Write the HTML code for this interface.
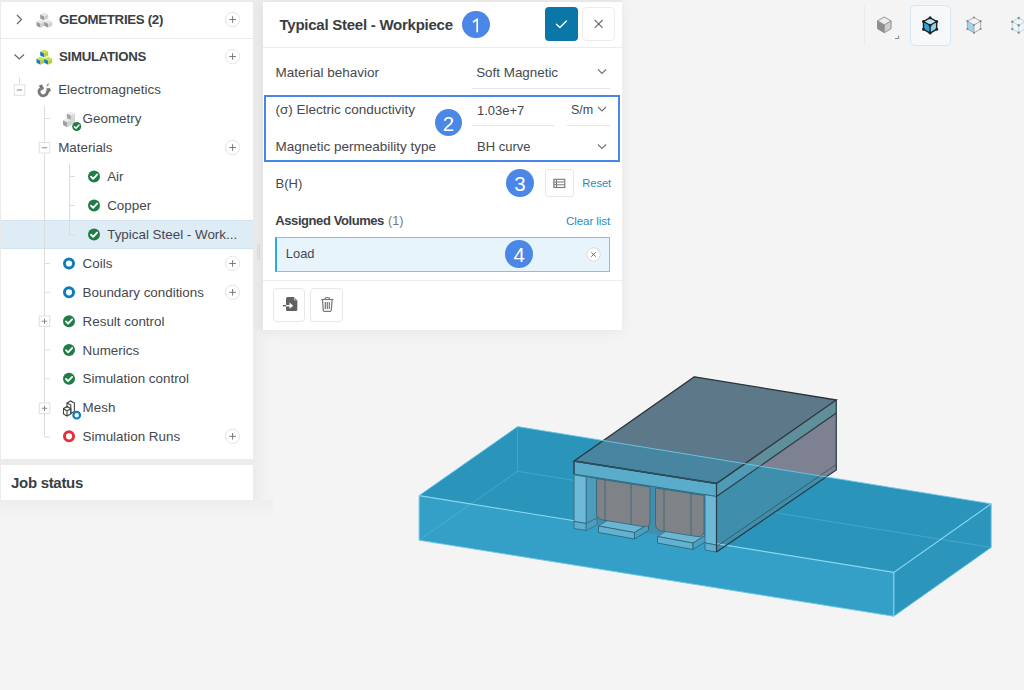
<!DOCTYPE html>
<html><head><meta charset="utf-8">
<style>
*{box-sizing:border-box;margin:0;padding:0}
html,body{width:1024px;height:690px;overflow:hidden}
body{background:#f4f4f4;font-family:"Liberation Sans",sans-serif;color:#3d4045;position:relative}
.abs{position:absolute}
.t{position:absolute;white-space:nowrap;line-height:1}
#leftbg{left:0;top:0;width:263px;height:330px;background:#ebebeb}
#tree{left:1px;top:2px;width:252px;height:457px;background:#fff}
#gap{display:none}
#job{left:1px;top:465px;width:252px;height:35px;background:#fff}
#form{left:263px;top:2px;width:359px;height:328px;background:#fff;box-shadow:0 2px 14px rgba(0,0,0,.06)}
.hdr{font-weight:bold;font-size:13.25px;letter-spacing:-0.3px;color:#3b3e43}
.ti{font-size:13.4px;color:#45484d}
.lbl{font-size:13.5px;color:#45484d}
.val{font-size:13px;color:#45484d}
.pc{position:absolute;width:15px;height:15px;border:1px solid #e3e3e3;border-radius:50%}
.pc:before{content:"";position:absolute;left:3px;top:6px;width:7px;height:1px;background:#777}
.pc:after{content:"";position:absolute;left:6px;top:3px;width:1px;height:7px;background:#777}
.vl{position:absolute;width:1px;background:#dcdcdc}
.hl{position:absolute;height:1px;background:#dcdcdc}
.bx{position:absolute;width:11px;height:11px;border:1px solid #e2e2e2;background:#fff}
.bx:before{content:"";position:absolute;left:2px;top:4px;width:5px;height:1px;background:#888}
.bx.p:after{content:"";position:absolute;left:4px;top:2px;width:1px;height:5px;background:#888}
.ring{position:absolute;width:12px;height:12px;border-radius:50%;border:2.5px solid #0e7cb9}
.badge{position:absolute;width:27.8px;height:27.8px;border-radius:50%;background:#4a87e6;color:#fff;font-size:20.5px;text-align:center;line-height:29.5px}
</style></head><body>
<div class="abs" id="leftbg"></div>
<div class="abs" style="left:0;top:330px;width:253px;height:170px;background:#ececec"></div>
<div class="abs" style="left:253px;top:330px;width:20px;height:190px;background:linear-gradient(to right,#ececec,#f0f0f0 40%,#f4f4f4)"></div>
<div class="abs" style="left:0;top:500px;width:273px;height:20px;background:linear-gradient(#ededed,#f1f1f1 40%,#f4f4f4)"></div>

<div class="abs" style="left:263px;top:0;width:360px;height:2px;background:#ececec"></div>
<div class="abs" id="gap"></div>
<div class="abs" id="tree"></div>
<div class="abs" id="job"></div>
<div class="abs" id="form"></div>

<!-- TREE -->
<div class="hl" style="left:1px;top:38px;width:252px;background:#ececec"></div>

<div class="t hdr" style="left:59px;top:12.8px">GEOMETRIES (2)</div>
<div class="t hdr" style="left:59px;top:49.8px">SIMULATIONS</div>

<div class="abs" style="left:1px;top:220px;width:252px;height:28.5px;background:#deecf6;border-top:1px solid #d3e3ef;border-bottom:1px solid #d3e3ef"></div>
<div class="t ti" style="left:58.2px;top:83.0px">Electromagnetics</div>
<div class="t ti" style="left:82.6px;top:112.0px">Geometry</div>
<div class="t ti" style="left:58.2px;top:141.0px">Materials</div>
<div class="t ti" style="left:107.2px;top:170.0px">Air</div>
<div class="t ti" style="left:107.2px;top:199.0px">Copper</div>
<div class="t ti" style="left:107.2px;top:228.0px">Typical Steel - Work...</div>
<div class="t ti" style="left:82.6px;top:257.0px">Coils</div>
<div class="t ti" style="left:82.6px;top:285.8px">Boundary conditions</div>
<div class="t ti" style="left:82.6px;top:314.7px">Result control</div>
<div class="t ti" style="left:82.6px;top:343.5px">Numerics</div>
<div class="t ti" style="left:82.6px;top:372.3px">Simulation control</div>
<div class="t ti" style="left:82.6px;top:401.2px">Mesh</div>
<div class="t ti" style="left:82.6px;top:429.8px">Simulation Runs</div>
<svg class="abs" style="left:0;top:0" width="253" height="460">
<path d="M19.5 77 V84" stroke="#dcdcdc" stroke-width="1"/>
<path d="M44.5 106 V437 H50" fill="none" stroke="#dcdcdc" stroke-width="1"/>
<path d="M44.5 118.5 H50" stroke="#dcdcdc" stroke-width="1"/>
<path d="M44.5 263.5 H50" stroke="#dcdcdc" stroke-width="1"/>
<path d="M44.5 292.3 H50" stroke="#dcdcdc" stroke-width="1"/>
<path d="M44.5 350 H50" stroke="#dcdcdc" stroke-width="1"/>
<path d="M44.5 378.8 H50" stroke="#dcdcdc" stroke-width="1"/>
<path d="M69.5 164 V235 H75" fill="none" stroke="#dcdcdc" stroke-width="1"/>
<path d="M69.5 176.5 H75" stroke="#dcdcdc" stroke-width="1"/>
<path d="M69.5 205.5 H75" stroke="#dcdcdc" stroke-width="1"/>
<rect x="14.25" y="84.75" width="10.5" height="10.5" fill="#fff" stroke="#e0e0e0" stroke-width="1"/><path d="M16.75 90.0 H22.25" stroke="#888" stroke-width="1"/>
<rect x="39.25" y="142.5" width="10.5" height="10.5" fill="#fff" stroke="#e0e0e0" stroke-width="1"/><path d="M41.75 147.75 H47.25" stroke="#888" stroke-width="1"/>
<rect x="39.25" y="316" width="10.5" height="10.5" fill="#fff" stroke="#e0e0e0" stroke-width="1"/><path d="M41.75 321.25 H47.25" stroke="#888" stroke-width="1"/><path d="M44.5 318.5 V324" stroke="#888" stroke-width="1"/>
<rect x="39.25" y="403" width="10.5" height="10.5" fill="#fff" stroke="#e0e0e0" stroke-width="1"/><path d="M41.75 408.25 H47.25" stroke="#888" stroke-width="1"/><path d="M44.5 405.5 V411" stroke="#888" stroke-width="1"/>
<path d="M17 15 L21.5 19.5 L17 24" fill="none" stroke="#666" stroke-width="1.2"/>
<path d="M14.5 54.5 L19.3 59 L24 54.5" fill="none" stroke="#666" stroke-width="1.2"/>
<path d="M40.2 14.5 L44.2 12.5 L48.2 14.5 L44.2 16.5 Z" fill="#e6e6e6"/><path d="M40.2 14.5 L44.2 16.5 L44.2 20.5 L40.2 18.5 Z" fill="#9a9a9a"/><path d="M48.2 14.5 L44.2 16.5 L44.2 20.5 L48.2 18.5 Z" fill="#cfcfcf"/>
<path d="M36.5 21.8 L40.5 19.8 L44.5 21.8 L40.5 23.8 Z" fill="#e6e6e6"/><path d="M36.5 21.8 L40.5 23.8 L40.5 27.8 L36.5 25.8 Z" fill="#9a9a9a"/><path d="M44.5 21.8 L40.5 23.8 L40.5 27.8 L44.5 25.8 Z" fill="#cfcfcf"/>
<path d="M44.2 21.8 L48.2 19.8 L52.2 21.8 L48.2 23.8 Z" fill="#e6e6e6"/><path d="M44.2 21.8 L48.2 23.8 L48.2 27.8 L44.2 25.8 Z" fill="#9a9a9a"/><path d="M52.2 21.8 L48.2 23.8 L48.2 27.8 L52.2 25.8 Z" fill="#cfcfcf"/>
<path d="M40.2 51.5 L44.2 49.5 L48.2 51.5 L44.2 53.5 Z" fill="#d4e04a"/><path d="M40.2 51.5 L44.2 53.5 L44.2 57.5 L40.2 55.5 Z" fill="#1a7fc0"/><path d="M48.2 51.5 L44.2 53.5 L44.2 57.5 L48.2 55.5 Z" fill="#b5d136"/>
<path d="M36.5 58.8 L40.5 56.8 L44.5 58.8 L40.5 60.8 Z" fill="#d4e04a"/><path d="M36.5 58.8 L40.5 60.8 L40.5 64.8 L36.5 62.8 Z" fill="#1a7fc0"/><path d="M44.5 58.8 L40.5 60.8 L40.5 64.8 L44.5 62.8 Z" fill="#b5d136"/>
<path d="M44.2 58.8 L48.2 56.8 L52.2 58.8 L48.2 60.8 Z" fill="#d4e04a"/><path d="M44.2 58.8 L48.2 60.8 L48.2 64.8 L44.2 62.8 Z" fill="#1a7fc0"/><path d="M52.2 58.8 L48.2 60.8 L48.2 64.8 L52.2 62.8 Z" fill="#b5d136"/>
<g fill="#777"><path d="M40.3 88.8 A4.1 4.1 0 1 0 47.05 90.3" fill="none" stroke="#777" stroke-width="2.7"/>
<path d="M38.9 85.4 L41.9 84.4 L44.1 88.4 L41.2 90.4 Z"/>
<path d="M46 88.6 L49.6 88 L50.9 90.6 L48.6 92.8 Z"/>
<path d="M48.9 82.4 L46.3 85.4 L47.7 85.6 L45.8 87.6 L49.5 84.6 L48 84.4 Z"/></g>
<g>
<path d="M66.8 113.4 L70.9 111.4 L75 113.4 L70.9 115.4 Z" fill="#ececec"/>
<path d="M66.8 113.4 L70.9 115.4 V124.5 L66.8 122.5 Z" fill="#a4a4a4"/>
<path d="M75 113.4 L70.9 115.4 V124.5 L75 122.5 Z" fill="#d8d8d8"/>
<path d="M63 120.3 L67.3 118.2 L71.6 120.3 L67.3 122.4 Z" fill="#ececec"/>
<path d="M63 120.3 L67.3 122.4 V127.2 L63 125.1 Z" fill="#a0a0a0"/>
<path d="M71.6 120.3 L67.3 122.4 V127.2 L71.6 125.1 Z" fill="#d2d2d2"/>
</g>
<circle cx="76.7" cy="126.5" r="4.5" fill="#1f7d45"/><path d="M74.45 126.65 L76.03 128.22 L79.03 125.08" fill="none" stroke="#fff" stroke-width="1.42" stroke-linecap="round" stroke-linejoin="round"/>
<g fill="none" stroke="#444" stroke-width="1.1"><path d="M67 403 L70.7 401 L74.4 403 L74.4 411.5 L70.8 413.5 L70.8 405 L67 403 V408"/><path d="M63.5 408.5 L67 406.5 L70.8 408.5 L70.8 414 L67 416 L63.5 414 Z M67 411 V416 M63.5 408.5 L67 411 L70.8 408.5"/></g>
<circle cx="76.7" cy="415.2" r="3.3" fill="#fff" stroke="#0e7cb9" stroke-width="2.2"/>
<circle cx="94" cy="176.5" r="6" fill="#1f7d45"/><path d="M91.00 176.70 L93.10 178.80 L97.10 174.60" fill="none" stroke="#fff" stroke-width="1.90" stroke-linecap="round" stroke-linejoin="round"/>
<circle cx="94" cy="205.5" r="6" fill="#1f7d45"/><path d="M91.00 205.70 L93.10 207.80 L97.10 203.60" fill="none" stroke="#fff" stroke-width="1.90" stroke-linecap="round" stroke-linejoin="round"/>
<circle cx="94" cy="234.5" r="6" fill="#1f7d45"/><path d="M91.00 234.70 L93.10 236.80 L97.10 232.60" fill="none" stroke="#fff" stroke-width="1.90" stroke-linecap="round" stroke-linejoin="round"/>
<circle cx="69" cy="321.2" r="6" fill="#1f7d45"/><path d="M66.00 321.40 L68.10 323.50 L72.10 319.30" fill="none" stroke="#fff" stroke-width="1.90" stroke-linecap="round" stroke-linejoin="round"/>
<circle cx="69" cy="350" r="6" fill="#1f7d45"/><path d="M66.00 350.20 L68.10 352.30 L72.10 348.10" fill="none" stroke="#fff" stroke-width="1.90" stroke-linecap="round" stroke-linejoin="round"/>
<circle cx="69" cy="378.8" r="6" fill="#1f7d45"/><path d="M66.00 379.00 L68.10 381.10 L72.10 376.90" fill="none" stroke="#fff" stroke-width="1.90" stroke-linecap="round" stroke-linejoin="round"/>
<circle cx="69" cy="263.5" r="4.55" fill="none" stroke="#0e7cb9" stroke-width="2.9"/>
<circle cx="69" cy="292.3" r="4.55" fill="none" stroke="#0e7cb9" stroke-width="2.9"/>
<circle cx="69" cy="436.3" r="4.55" fill="none" stroke="#e0313b" stroke-width="2.9"/>
<circle cx="232.6" cy="19.5" r="7.2" fill="#fff" stroke="#e4e4e4" stroke-width="1"/><path d="M229.3 19.5 H235.9 M232.6 16.2 V22.8" stroke="#7a7a7a" stroke-width="1"/>
<circle cx="232.6" cy="56.5" r="7.2" fill="#fff" stroke="#e4e4e4" stroke-width="1"/><path d="M229.3 56.5 H235.9 M232.6 53.2 V59.8" stroke="#7a7a7a" stroke-width="1"/>
<circle cx="232.6" cy="147.5" r="7.2" fill="#fff" stroke="#e4e4e4" stroke-width="1"/><path d="M229.3 147.5 H235.9 M232.6 144.2 V150.8" stroke="#7a7a7a" stroke-width="1"/>
<circle cx="232.6" cy="263.5" r="7.2" fill="#fff" stroke="#e4e4e4" stroke-width="1"/><path d="M229.3 263.5 H235.9 M232.6 260.2 V266.8" stroke="#7a7a7a" stroke-width="1"/>
<circle cx="232.6" cy="292.3" r="7.2" fill="#fff" stroke="#e4e4e4" stroke-width="1"/><path d="M229.3 292.3 H235.9 M232.6 289.0 V295.6" stroke="#7a7a7a" stroke-width="1"/>
<circle cx="232.6" cy="436.3" r="7.2" fill="#fff" stroke="#e4e4e4" stroke-width="1"/><path d="M229.3 436.3 H235.9 M232.6 433.0 V439.6" stroke="#7a7a7a" stroke-width="1"/>
</svg>
<div class="t hdr" style="left:11px;top:475.2px;font-size:15px;letter-spacing:-0.3px">Job status</div>

<!-- FORM -->
<div class="hl" style="left:263px;top:47px;width:359px;background:#ececec"></div>
<div class="t" style="left:279.5px;top:17.3px;font-size:15px;letter-spacing:-0.25px;font-weight:bold;color:#3a3d42">Typical Steel - Workpiece</div>
<div class="badge" style="left:462px;top:10.5px"></div><svg class="abs" style="left:462px;top:10.5px" width="28" height="28"><path d="M11 11.2 L15.2 8.1 V21.3" fill="none" stroke="#fff" stroke-width="1.7" stroke-linejoin="round"/></svg>
<div class="abs" style="left:545px;top:7.3px;width:33.2px;height:33.4px;background:#0a77a8;border-radius:4px"></div>
<div class="abs" style="left:582.3px;top:7.3px;width:33.2px;height:33.4px;background:#fff;border:1px solid #ebebeb;border-radius:4.5px"></div>
<svg class="abs" style="left:540px;top:0" width="85" height="48">
  <path d="M16.4 24.2 L19.9 27.5 L26.4 21" fill="none" stroke="#fff" stroke-width="1.35" stroke-linecap="round" stroke-linejoin="round"/>
  <path d="M54.8 20 L62.6 27.8 M62.6 20 L54.8 27.8" fill="none" stroke="#6a6a6a" stroke-width="1.1"/>
</svg>

<div class="t lbl" style="left:275.5px;top:66.1px">Material behavior</div>
<div class="t val" style="left:476.2px;top:66.1px;font-size:13.4px">Soft Magnetic</div>
<div class="hl" style="left:471.5px;top:88px;width:138.5px;background:#e6e6e6"></div>

<div class="abs" style="left:264.4px;top:95.1px;width:355.2px;height:66.8px;border:2px solid #4a86e8"></div>
<div class="t lbl" style="left:275.5px;top:103.2px">(&sigma;) Electric conductivity</div>
<div class="t val" style="left:477px;top:103.8px">1.03e+7</div>
<div class="hl" style="left:472px;top:125px;width:82px;background:#e6e6e6"></div>
<div class="t val" style="left:571px;top:103.9px;font-size:12.5px">S/m</div>
<div class="hl" style="left:566.7px;top:125px;width:43px;background:#e6e6e6"></div>
<div class="badge" style="left:434.5px;top:108.6px">2</div>
<div class="t lbl" style="left:275.5px;top:140.1px">Magnetic permeability type</div>
<div class="t val" style="left:477px;top:140.1px">BH curve</div>
<svg class="abs" style="left:590px;top:60px" width="25" height="100">
  <path d="M8 9.5 L12 13.5 L16 9.5" fill="none" stroke="#737373" stroke-width="1.1"/>
  <path d="M8 47 L12 51 L16 47" fill="none" stroke="#737373" stroke-width="1.1"/>
  <path d="M8 84.5 L12 88.5 L16 84.5" fill="none" stroke="#737373" stroke-width="1.1"/>
</svg>

<div class="t val" style="left:275.5px;top:176.6px">B(H)</div>
<div class="badge" style="left:506px;top:169px">3</div>
<div class="abs" style="left:545px;top:169.3px;width:28.6px;height:28px;background:#fff;border:1px solid #e6e6e6;border-radius:3px"></div>
<svg class="abs" style="left:545px;top:169px" width="29" height="29">
  <rect x="8.8" y="10.3" width="11" height="8.2" fill="none" stroke="#777" stroke-width="1.1"/>
  <path d="M8.8 13 H19.8 M8.8 15.8 H19.8 M11.5 10.3 V18.5" stroke="#777" stroke-width="1"/>
</svg>
<div class="t" style="left:582.3px;top:178px;font-size:11.2px;letter-spacing:-0.1px;color:#1f8cc0">Reset</div>

<div class="t" style="left:275.3px;top:214.3px;font-size:13px;letter-spacing:-0.42px;font-weight:bold;color:#3b3e43">Assigned Volumes</div><div class="t" style="left:388px;top:214.6px;font-size:12.6px;color:#777">(1)</div>
<div class="t" style="left:566px;top:214.6px;font-size:11.6px;letter-spacing:-0.1px;color:#1f8cc0">Clear list</div>

<div class="abs" style="left:275px;top:237px;width:335px;height:34.5px;background:#e8f4fb;border:1px solid #7cc3e6;border-left:2px solid #29ace0"></div>
<div class="t" style="left:285.8px;top:248.3px;font-size:12.9px;color:#45484d">Load</div>
<div class="badge" style="left:505.3px;top:240px">4</div>
<svg class="abs" style="left:584px;top:244.5px" width="19" height="19">
  <circle cx="9.5" cy="9.5" r="6.8" fill="#fff" stroke="#dadada" stroke-width="1"/>
  <path d="M7.3 7.3 L11.7 11.7 M11.7 7.3 L7.3 11.7" stroke="#555" stroke-width="0.9"/>
</svg>

<div class="hl" style="left:263px;top:279.5px;width:359px;background:#ececec"></div>
<div class="abs" style="left:273.3px;top:288.3px;width:32.2px;height:33.4px;border:1px solid #e8e8e8;border-radius:4px"></div>
<div class="abs" style="left:310.4px;top:288.3px;width:32.3px;height:33.4px;border:1px solid #e8e8e8;border-radius:4px"></div>
<svg class="abs" style="left:263px;top:280px" width="90" height="50">
  <path d="M24.5 17 H31 L34.3 20.3 V29.5 Q34.3 31 32.8 31 H24.5 Q23 31 23 29.5 V18.5 Q23 17 24.5 17 Z" fill="#616161"/>
  <path d="M31.2 17.3 V20.2 H34.1 Z" fill="#fff"/><path d="M31.6 18 L33.5 19.9 H31.6 Z" fill="#777"/>
  <path d="M19.8 25.7 H23" stroke="#616161" stroke-width="1.4"/>
  <path d="M23 25.7 H27" stroke="#fff" stroke-width="1.4"/>
  <path d="M26.5 22.6 L30.2 25.7 L26.5 28.8 Z" fill="#fff"/>
  <g fill="none" stroke="#777" stroke-width="1.2">
    <path d="M58.3 19.5 H70.3"/>
    <path d="M62 19.3 Q62 17.5 64.3 17.5 Q66.6 17.5 66.6 19.3"/>
    <path d="M59.5 20 L60.3 30.3 Q60.5 31.3 61.5 31.3 H67.1 Q68.1 31.3 68.3 30.3 L69.1 20"/>
    <path d="M62.3 22 V29 M64.3 22 V29 M66.3 22 V29"/>
  </g>
</svg>
<div class="abs" style="left:256.5px;top:244px;width:1px;height:16px;background:#d8d8d8"></div>
<div class="abs" style="left:258.5px;top:244px;width:1px;height:16px;background:#d8d8d8"></div>

<!-- VIEWPORT -->
<!--3D-->
<svg class="abs" style="left:0;top:0" width="1024" height="690">
<defs><clipPath id="inpl"><polygon points="517.6,426.6 991.2,503.8 991.2,547.4 893.8,616.3 419.1,540.2 419.1,495.6"/></clipPath></defs>
<polygon points="694.5,376.8 836.3,400.0 716.5,483.5 574.0,461.0" fill="#5c7889"/>
<polygon points="716.5,483.5 836.3,400.0 836.3,413.0 716.5,496.5" fill="#5f8f9a"/>
<polygon points="716.5,496.5 836.3,413.0 836.3,470.0 716.5,552.0" fill="#7e8192"/>
<polygon points="517.6,426.6 991.2,503.8 893.8,572.4 419.1,495.6" fill="#2a94ba"/>
<polygon points="419.1,495.6 893.8,572.4 893.8,616.3 419.1,540.2" fill="#35a0c7"/>
<polygon points="893.8,572.4 991.2,503.8 991.2,547.4 893.8,616.3" fill="#2c95bc"/>
<path d="M517.6 426.6 V471.3 L991.2 547.4 M517.6 471.3 L419.1 540.2" fill="none" stroke="#5cc0e4" stroke-width="0.8" opacity="0.6"/>
<g clip-path="url(#inpl)">
<polygon points="694.5,376.8 836.3,400.0 716.5,483.5 574.0,461.0" fill="#4785a0"/>
<polygon points="716.5,483.5 836.3,400.0 836.3,413.0 716.5,496.5" fill="#4f9bb6"/>
<polygon points="716.5,496.5 836.3,413.0 836.3,470.0 716.5,552.0" fill="#3f8eab"/>
</g>
<path d="M419.1 495.6 L893.8 572.4 L991.2 503.8 M893.8 572.4 V616.3" fill="none" stroke="#86d6f2" stroke-width="1.1"/>
<polygon points="586.2,476.8 705,494.7 705,543 586.2,523.5" fill="#3f8fae"/>
<polygon points="586.2,476.8 597,478.6 597,518 586.2,523.5" fill="#4d9cbb" stroke="#2f6577" stroke-width="0.6"/>
<polygon points="598.5,526.0 634.5,532.5 648.5,524.0 612.5,517.5" fill="#6ab6d4" stroke="#2f6577" stroke-width="0.6"/><polygon points="598.5,526.0 634.5,532.5 634.5,539.0 598.5,532.5" fill="#63b1d0" stroke="#2f6577" stroke-width="0.9"/><polygon points="634.5,532.5 648.5,524.0 648.5,530.5 634.5,539.0" fill="#4e9fbf" stroke="#2f6577" stroke-width="0.9"/>
<polygon points="657.5,536.5 693.0,543.0 706.0,535.0 670.5,528.5" fill="#6ab6d4" stroke="#2f6577" stroke-width="0.6"/><polygon points="657.5,536.5 693.0,543.0 693.0,549.5 657.5,543.0" fill="#63b1d0" stroke="#2f6577" stroke-width="0.9"/><polygon points="693.0,543.0 706.0,535.0 706.0,541.5 693.0,549.5" fill="#4e9fbf" stroke="#2f6577" stroke-width="0.9"/>
<path d="M596.5 478.6 L650 487 L650 521.5 Q650 527.5 643 526.5 L603 520 Q596.5 519 596.5 513 Z" fill="#7f8388" stroke="#2f6577" stroke-width="0.8"/>
<path d="M605 480 V521 M631 484.2 V525" stroke="#2f6577" stroke-width="0.8"/>
<path d="M655.5 488 L704 495.5 L704 531.5 Q704 537.5 697 536.5 L662 531 Q655.5 530 655.5 524 Z" fill="#7f8388" stroke="#2f6577" stroke-width="0.8"/>
<path d="M664 489.3 V531 M691 493.5 V535.5" stroke="#2f6577" stroke-width="0.8"/>
<polygon points="574.0,461.0 716.5,483.5 716.5,496.5 574.0,474.0" fill="#5aaccb" stroke="#2f5f70" stroke-width="0.8"/>
<polygon points="574,474.8 586.2,476.8 586.2,523.5 574,521.5" fill="#6cb8d6" stroke="#2f6577" stroke-width="0.8"/>
<polygon points="574,521.5 586.2,523.5 586.2,530.5 574,528.5" fill="#5eaecd" stroke="#2f6577" stroke-width="0.8"/>
<polygon points="586.2,523.5 597,518 597,525 586.2,530.5" fill="#4d9cbb" stroke="#2f6577" stroke-width="0.6"/>
<polygon points="705,494.7 716.5,496.5 716.5,545 705,543" fill="#6cb8d6" stroke="#2f6577" stroke-width="0.8"/>
<polygon points="705,543 716.5,545 716.5,552 705,550" fill="#5eaecd" stroke="#2f6577" stroke-width="0.8"/>
<polygon points="694.5,376.8 836.3,400.0 716.5,483.5 574.0,461.0" fill="none" stroke="#2a3338" stroke-width="1.3"/>
<path d="M836.3 400.0 V470.0 L716.5 552.0 M716.5 483.5 V552.0 M836.3 413.0 L716.5 496.5 M574.0 461.0 V474.0" fill="none" stroke="#2a3a42" stroke-width="1.2"/>
<path d="M836.3 464.5 L716.5 546.5" stroke="#2e4a55" stroke-width="0.7"/>
<path d="M574.0 461.0 L716.5 483.5" stroke="#2c4f5e" stroke-width="1.3"/>
<path d="M419.1 495.6 L517.6 426.6 L991.2 503.8 V547.4 L893.8 616.3 L419.1 540.2 Z" fill="none" stroke="#6cc8ea" stroke-width="0.9"/>
</svg>
<!--/3D-->
<div class="abs" style="left:864px;top:5px;width:1px;height:40px;background:#ececec"></div>
<div class="abs" style="left:910px;top:5px;width:40.5px;height:40.5px;border:1px solid #d5e7f3;border-radius:5px;background:#f7f8fa"></div>
<svg class="abs" style="left:860px;top:0" width="164" height="50">
  <g transform="translate(24.3,24.8)">
    <path d="M0 -7.8 L6.8 -3.9 L0 0 L-6.8 -3.9 Z" fill="#eeeeee"/>
    <path d="M-6.8 -3.9 L0 0 V7.9 L-6.8 3.9 Z" fill="#8e8e8e"/>
    <path d="M6.8 -3.9 L0 0 V7.9 L6.8 3.9 Z" fill="#cfcfcf"/>
    <path d="M0 -7.8 L6.8 -3.9 V3.9 L0 7.9 L-6.8 3.9 V-3.9 Z M-6.8 -3.9 L0 0 L6.8 -3.9 M0 0 V7.9" fill="none" stroke="#8a8a8a" stroke-width="0.9"/>
  </g>
  <path d="M38.7 35.5 V38.5 H35" fill="none" stroke="#888" stroke-width="1"/>
  <g transform="translate(70.1,25.3)">
    <path d="M0 -7.5 L6.6 -3.8 L0 0 L-6.6 -3.8 Z" fill="#b9e3f6"/>
    <path d="M-6.6 -3.8 L0 0 V7.8 L-6.6 4 Z" fill="#2aa5dc"/>
    <path d="M6.6 -3.8 L0 0 V7.8 L6.6 4 Z" fill="#8fd0ee"/>
    <path d="M0 -7.5 L6.6 -3.8 V4 L0 7.8 L-6.6 4 V-3.8 Z M-6.6 -3.8 L0 0 L6.6 -3.8 M0 0 V7.8" fill="none" stroke="#222" stroke-width="1.4"/>
    <g fill="#222"><circle cx="0" cy="-7.5" r="1.5"/><circle cx="6.6" cy="-3.8" r="1.5"/><circle cx="-6.6" cy="-3.8" r="1.5"/><circle cx="0" cy="0" r="1.5"/><circle cx="6.6" cy="4" r="1.5"/><circle cx="-6.6" cy="4" r="1.5"/><circle cx="0" cy="7.8" r="1.5"/></g>
  </g>
  <g transform="translate(114,25)">
    <path d="M-6.6 -3.8 L0 0 V7.8 L-6.6 4 Z" fill="#9fd3ee"/>
    <path d="M0 -7.5 L6.6 -3.8 V4 L0 7.8 L-6.6 4 V-3.8 Z M-6.6 -3.8 L0 0 L6.6 -3.8 M0 0 V7.8" fill="none" stroke="#999" stroke-width="0.8"/>
    <g fill="#8a8a8a"><circle cx="0" cy="-7.5" r="1.1"/><circle cx="6.6" cy="-3.8" r="1.1"/><circle cx="-6.6" cy="-3.8" r="1.1"/><circle cx="0" cy="0" r="1.1"/><circle cx="6.6" cy="4" r="1.1"/><circle cx="-6.6" cy="4" r="1.1"/><circle cx="0" cy="7.8" r="1.1"/></g>
  </g>
  <g transform="translate(158.7,25.3)">
    <path d="M0 -7.3 L6.4 -3.6 V3.8 L0 7.3 L-6.4 3.8 V-3.6 Z M-6.4 -3.6 L0 0 L6.4 -3.6 M0 0 V7.3" fill="none" stroke="#a8d8f2" stroke-width="0.9"/>
    <g fill="#8a8a8a"><circle cx="0" cy="-7.3" r="1.2"/><circle cx="6.4" cy="-3.6" r="1.2"/><circle cx="-6.4" cy="-3.6" r="1.2"/><circle cx="0" cy="0" r="1.2"/><circle cx="6.4" cy="3.8" r="1.2"/><circle cx="-6.4" cy="3.8" r="1.2"/><circle cx="0" cy="7.3" r="1.2"/></g>
  </g>
</svg>
</body></html>
